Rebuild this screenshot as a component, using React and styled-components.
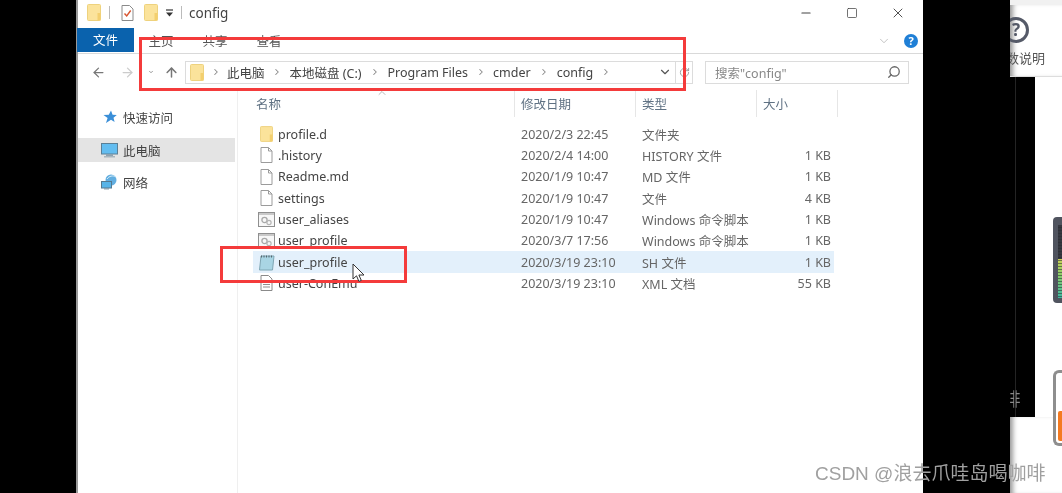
import React from 'react'
import styled, { createGlobalStyle } from 'styled-components'
import {
    ArrowLeft, ArrowRight, ArrowUp, ChevronDown, ChevronRight, ChevronUp,
    Minus, RotateCw, Search, Square, X
} from 'lucide-react'

const FONT = '"Noto Sans", "Noto Sans CJK SC", sans-serif'

const GlobalStyle = createGlobalStyle`
    html, body {
        margin: 0;
        padding: 0;
        background: #000;
        overflow: hidden;
    }
    * {
        box-sizing: border-box;
    }
`

const Page = styled.div`
    position: relative;
    display: grid;
    grid-template-columns: 76px 847px 1fr;
    width: 1062px;
    height: 493px;
    overflow: hidden;
    background: #000;
    font-family: ${FONT};
    font-size: 12.5px;
    color: #555;
    filter: blur(0.45px);
`

const BlackBar = styled.div`
    background: #000;
`

const Explorer = styled.div`
    display: flex;
    flex-direction: column;
    background: #fff;
    border-left: 2px solid #9a9a9a;
`

const TitleBar = styled.div`
    display: flex;
    align-items: center;
    height: 28px;
    padding: 0 2px 3px 9px;
`

const QuickIcon = styled.span`
    display: flex;
    margin-right: ${p => p.$gap || 0}px;
`

const TitleSep = styled.span`
    width: 1px;
    height: 13px;
    background: #bbb;
    margin-right: ${p => p.$gap}px;
`

const TitleText = styled.span`
    font-size: 13.5px;
    color: #444;
    flex: 1;
`

const WindowButton = styled.span`
    display: flex;
    justify-content: center;
    width: 46px;
    color: #444;
`

const Ribbon = styled.div`
    display: flex;
    align-items: center;
    height: 26px;
    border-bottom: 1px solid #d9d9d9;
    padding-right: 5px;
`

const FileTab = styled.div`
    width: 57px;
    height: 24px;
    margin: -2px 0 0 -1px;
    background: #0a62ad;
    color: #fff;
    display: flex;
    align-items: center;
    justify-content: center;
`

const RibbonTab = styled.div`
    width: 54px;
    text-align: center;
    color: #555;
`

const RibbonSpacer = styled.div`
    flex: 1;
`

const HelpDot = styled.div`
    width: 14px;
    height: 14px;
    margin-left: 13px;
    border-radius: 50%;
    background: #1f7fd6;
    color: #fff;
    font-size: 11px;
    font-weight: 700;
    line-height: 14px;
    text-align: center;
`

const AddressRow = styled.div`
    display: flex;
    align-items: center;
    height: 36px;
    padding: 0 0 0 11px;
    color: #888;
`

const NavButton = styled.span`
    display: flex;
    justify-content: center;
    width: ${p => p.$w}px;
    color: ${p => p.$color || '#777'};
`

const AddressBox = styled.div`
    display: flex;
    align-items: center;
    width: 508px;
    height: 23px;
    margin-left: -3px;
    padding-left: 4px;
    border: 1px solid #dcdcdc;
    color: #444;
`

const Crumb = styled.span`
    white-space: nowrap;
`

const CrumbArrow = styled.span`
    display: flex;
    justify-content: center;
    width: ${p => p.$w}px;
    color: #888;
`

const AddressEnd = styled.div`
    display: flex;
    align-items: center;
    margin-left: auto;
    height: 100%;
`

const RefreshCell = styled.span`
    display: flex;
    align-items: center;
    justify-content: center;
    width: 17px;
    height: 100%;
    margin-left: 3px;
    border-left: 1px solid #dcdcdc;
    color: #999;
`

const SearchBox = styled.div`
    display: flex;
    align-items: center;
    justify-content: space-between;
    width: 204px;
    height: 23px;
    margin-left: 12px;
    padding: 0 7px 0 9px;
    border: 1px solid #dcdcdc;
    color: #888;
`

const SearchGlass = styled(Search)`
    transform: scaleX(-1);
    color: #666;
`

const Body = styled.div`
    display: flex;
    flex: 1;
    min-height: 0;
`

const Sidebar = styled.div`
    width: 160px;
    padding-top: 15px;
    border-right: 1px solid #efefef;
`

const NavItem = styled.div`
    display: flex;
    align-items: center;
    height: 24px;
    width: 157px;
    margin-bottom: ${p => p.$gap}px;
    padding-left: ${p => p.$indent}px;
    background: ${p => p.$active ? '#e4e4e4' : 'transparent'};
    color: #444;
`

const NavLabel = styled.span`
    margin-left: ${p => p.$gap}px;
`

const Files = styled.div`
    flex: 1;
    padding-left: 2px;
`

const HeaderRow = styled.div`
    position: relative;
    display: grid;
    grid-template-columns: 275px 121px 121px 81px;
    height: 27px;
`

const HeaderCell = styled.div`
    display: flex;
    align-items: center;
    padding-left: ${p => p.$pad}px;
    border-right: 1px solid #e6e6e6;
    color: #5f7183;
`

const SortCaret = styled(ChevronUp)`
    position: absolute;
    left: 136px;
    top: -3px;
    color: #888;
`

const FileList = styled.div`
    margin: 6.5px 0 0 13px;
    width: 581px;
`

const FileRow = styled.div`
    display: grid;
    grid-template-columns: 25px 243px 121px 1fr 60px;
    align-items: center;
    height: 21.33px;
    padding-right: 3px;
    background: ${p => p.$hover ? '#e3f0fb' : 'transparent'};
    white-space: nowrap;
`

const FileIconCell = styled.span`
    display: flex;
    justify-content: center;
    padding-left: 1px;
`

const FileName = styled.span`
    color: #444;
`

const FileMeta = styled.span`
    color: #666;
`

const FileSize = styled.span`
    color: #666;
    text-align: right;
`

const RightPane = styled.div`
    position: relative;
    display: flex;
    flex-direction: column;
    align-items: flex-end;
    background: #000;
`

const HelpPanel = styled.div`
    width: 52px;
    height: 77px;
    overflow: hidden;
    background: #fff;
    border-top: 5px solid #f1f1f1;
    border-bottom: 1px solid #ddd;
    box-shadow: inset 6px 0 5px -3px #999;
`

const HelpCircle = styled.div`
    width: 26px;
    height: 26px;
    margin: 12px 0 0 -7px;
    border: 3px solid #555a68;
    border-radius: 50%;
    color: #555a68;
    font-size: 17px;
    font-weight: 700;
    line-height: 20px;
    text-align: center;
`

const HelpLabel = styled.div`
    display: flex;
    justify-content: flex-end;
    margin-top: 5px;
    padding-right: 17px;
    font-size: 13px;
    color: #555;
    white-space: nowrap;
`

const MiddlePanel = styled.div`
    flex: 1;
    width: 27px;
    padding: 140px 0 0 18px;
    background: #fff;
`

const Meter = styled.div`
    width: 9px;
    height: 86px;
    padding: 8px 0 5px 5px;
    border-radius: 4px 0 0 4px;
    background: #50545f;
`

const MeterBars = styled.div`
    height: 100%;
    background:
        repeating-linear-gradient(to bottom, transparent 0, transparent 2px, rgba(40, 42, 50, 0.55) 2px, rgba(40, 42, 50, 0.55) 3px),
        linear-gradient(to bottom, #35383f 0, #35383f 46%, #c9d056 47%, #86cc6c 70%, #3fb8a2 100%);
`

const BottomPanel = styled.div`
    width: 52px;
    height: 76px;
    background: #fff;
    box-shadow: inset 6px 0 5px -3px #999;
`

const Gauge = styled.div`
    position: absolute;
    left: 130px;
    top: 370px;
    width: 20px;
    height: 76px;
    padding: 38px 0 2px 2px;
    border: 3px solid #8e8e8e;
    border-right: none;
    border-radius: 6px 0 0 6px;
    background: #fff;
`

const GaugeFill = styled.div`
    height: 100%;
    border-radius: 2px 0 0 2px;
    background: #f47a20;
`

const SeamLine = styled.div`
    position: absolute;
    left: 92px;
    top: 77px;
    width: 1px;
    height: 340px;
    background: #242424;
`

const SeamGlyph = styled.div`
    position: absolute;
    left: 83px;
    top: 390px;
    font-size: 18px;
    line-height: 18px;
    color: #8a8a8a;
    transform: scaleX(0.6);
`

const Annotation = styled.div`
    position: absolute;
    left: ${p => p.$x}px;
    top: ${p => p.$y}px;
    width: ${p => p.$w}px;
    height: ${p => p.$h}px;
    border: 3px solid #f43b3b;
    pointer-events: none;
`

const Pointer = styled.svg`
    position: absolute;
    left: 352px;
    top: 263px;
`

const Watermark = styled.div`
    position: absolute;
    left: 815px;
    top: 461px;
    font-family: "Liberation Sans", "Noto Sans CJK SC", sans-serif;
    font-size: 19px;
    line-height: 26px;
    color: #a0a0a0;
    white-space: nowrap;
`

const FolderIcon = ({ w = 14, h = 17 }) => (
    <svg width={w} height={h} viewBox="0 0 14 17">
        <rect x="0.5" y="0.5" width="13" height="16" rx="1" fill="#fbe39b" stroke="#eed27e" />
        <rect x="10.5" y="9" width="3" height="7.5" fill="#f3cf6e" />
    </svg>
)

const DocIcon = () => (
    <svg width="13" height="16" viewBox="0 0 13 16">
        <path d="M1 .5h7.5l3.5 3.5v11.5H1z" fill="#fff" stroke="#9b9b9b" />
        <path d="M8.5.5V4H12" fill="none" stroke="#9b9b9b" />
    </svg>
)

const CheckDocIcon = () => (
    <svg width="13" height="16" viewBox="0 0 13 16">
        <path d="M1 .5h7.5l3.5 3.5v11.5H1z" fill="#fff" stroke="#8a8a8a" />
        <path d="M3.5 8.5l2.2 2.5 4-5.5" fill="none" stroke="#d8542f" strokeWidth="1.4" />
    </svg>
)

const ScriptIcon = () => (
    <svg width="17" height="15" viewBox="0 0 17 15">
        <rect x="0.5" y="0.5" width="16" height="14" fill="#f7f7f7" stroke="#8f8f8f" />
        <rect x="1" y="1" width="15" height="2" fill="#c9c9c9" />
        <circle cx="6.5" cy="8" r="2.6" fill="none" stroke="#a8a8a8" strokeWidth="1.3" />
        <circle cx="11" cy="10.5" r="2.1" fill="none" stroke="#b5b5b5" strokeWidth="1.2" />
    </svg>
)

const NotepadIcon = () => (
    <svg width="17" height="17" viewBox="0 0 17 17">
        <path d="M3 2h13l-1.5 14H1.5z" fill="#a9d5e4" stroke="#7fa6b4" />
        <path d="M3.5 1.5v2M6 1.5v2M8.5 1.5v2M11 1.5v2M13.5 1.5v2" stroke="#55656c" />
    </svg>
)

const XmlIcon = () => (
    <svg width="13" height="16" viewBox="0 0 13 16">
        <path d="M1 .5h7.5l3.5 3.5v11.5H1z" fill="#fff" stroke="#8a8a8a" />
        <path d="M3 7h7M3 9.5h7M3 12h7" stroke="#8f8f8f" />
    </svg>
)

const StarIcon = () => (
    <svg width="14" height="14" viewBox="0 0 14 14">
        <path d="M8 .5l1.6 4.2 4.2.2-3.3 2.8 1.1 4.3L8 9.7l-5 3.3 1.6-5L.5 5l5.3-.2z" fill="#3b8fd8" />
    </svg>
)

const PcIcon = () => (
    <svg width="17" height="15" viewBox="0 0 17 15">
        <rect x="0.5" y="0.5" width="16" height="10.5" fill="#63bdf0" stroke="#5b7f96" />
        <rect x="5" y="11" width="7" height="2" fill="#8fa3b0" />
        <rect x="3" y="13" width="11" height="1.5" fill="#a7b5be" />
    </svg>
)

const NetworkIcon = () => (
    <svg width="17" height="16" viewBox="0 0 17 16">
        <circle cx="10" cy="6" r="5.5" fill="#62aee0" />
        <path d="M6 5c2-3 6-4 9-2" stroke="#d8eefa" fill="none" />
        <rect x="0.5" y="7.5" width="10" height="6.5" fill="#58b4e8" stroke="#56798f" />
        <rect x="3" y="14" width="5" height="1.5" fill="#8fa3b0" />
    </svg>
)

const QuickDropdown = () => (
    <svg width="9" height="8" viewBox="0 0 9 8">
        <path d="M1 1h7" stroke="#333" strokeWidth="1.2" />
        <path d="M1 3.5h7L4.5 7.5z" fill="#333" />
    </svg>
)

const crumbs = [
    ['此电脑', 25],
    ['本地磁盘 (C:)', 26],
    ['Program Files', 25],
    ['cmder', 26],
    ['config', 26]
]

const files = [
    { icon: <FolderIcon w={13} h={16} />, name: 'profile.d', date: '2020/2/3 22:45', type: '文件夹', size: '' },
    { icon: <DocIcon />, name: '.history', date: '2020/2/4 14:00', type: 'HISTORY 文件', size: '1 KB' },
    { icon: <DocIcon />, name: 'Readme.md', date: '2020/1/9 10:47', type: 'MD 文件', size: '1 KB' },
    { icon: <DocIcon />, name: 'settings', date: '2020/1/9 10:47', type: '文件', size: '4 KB' },
    { icon: <ScriptIcon />, name: 'user_aliases', date: '2020/1/9 10:47', type: 'Windows 命令脚本', size: '1 KB' },
    { icon: <ScriptIcon />, name: 'user_profile', date: '2020/3/7 17:56', type: 'Windows 命令脚本', size: '1 KB' },
    { icon: <NotepadIcon />, name: 'user_profile', date: '2020/3/19 23:10', type: 'SH 文件', size: '1 KB', hover: true },
    { icon: <XmlIcon />, name: 'user-ConEmu', date: '2020/3/19 23:10', type: 'XML 文档', size: '55 KB' }
]

const App = () => (
    <Page>
        <GlobalStyle />
        <BlackBar />
        <Explorer>
            <TitleBar>
                <QuickIcon $gap={8}><FolderIcon /></QuickIcon>
                <TitleSep $gap={11} />
                <QuickIcon $gap={10}><CheckDocIcon /></QuickIcon>
                <QuickIcon $gap={7}><FolderIcon /></QuickIcon>
                <QuickIcon $gap={7}><QuickDropdown /></QuickIcon>
                <TitleSep $gap={7} />
                <TitleText>config</TitleText>
                <WindowButton><Minus size={14} /></WindowButton>
                <WindowButton><Square size={12} strokeWidth={1.5} /></WindowButton>
                <WindowButton><X size={16} strokeWidth={1.4} /></WindowButton>
            </TitleBar>
            <Ribbon>
                <FileTab>文件</FileTab>
                <RibbonTab>主页</RibbonTab>
                <RibbonTab>共享</RibbonTab>
                <RibbonTab>查看</RibbonTab>
                <RibbonSpacer />
                <ChevronDown size={14} strokeWidth={1.2} color="#aaa" />
                <HelpDot>?</HelpDot>
            </Ribbon>
            <AddressRow>
                <NavButton $w={18}><ArrowLeft size={15} /></NavButton>
                <NavButton $w={41} $color="#ccc"><ArrowRight size={15} /></NavButton>
                <NavButton $w={6}><ChevronDown size={10} strokeWidth={3} /></NavButton>
                <NavButton $w={34}><ArrowUp size={15} strokeWidth={2.4} /></NavButton>
                <AddressBox>
                    <FolderIcon />
                    <CrumbArrow $w={23}><ChevronRight size={10} strokeWidth={2.5} /></CrumbArrow>
                    {crumbs.map(([label, arrow]) => (
                        <React.Fragment key={label}>
                            <Crumb>{label}</Crumb>
                            <CrumbArrow $w={arrow}><ChevronRight size={10} strokeWidth={2.5} /></CrumbArrow>
                        </React.Fragment>
                    ))}
                    <AddressEnd>
                        <ChevronDown size={14} strokeWidth={2} color="#555" />
                        <RefreshCell><RotateCw size={11} /></RefreshCell>
                    </AddressEnd>
                </AddressBox>
                <SearchBox>
                    <span>搜索"config"</span>
                    <SearchGlass size={14} strokeWidth={2.2} />
                </SearchBox>
            </AddressRow>
            <Body>
                <Sidebar>
                    <NavItem $gap={9} $indent={25}><StarIcon /><NavLabel $gap={6}>快速访问</NavLabel></NavItem>
                    <NavItem $gap={8} $indent={23} $active><PcIcon /><NavLabel $gap={5}>此电脑</NavLabel></NavItem>
                    <NavItem $gap={0} $indent={23}><NetworkIcon /><NavLabel $gap={5}>网络</NavLabel></NavItem>
                </Sidebar>
                <Files>
                    <HeaderRow>
                        <HeaderCell $pad={16}>名称</HeaderCell>
                        <HeaderCell $pad={6}>修改日期</HeaderCell>
                        <HeaderCell $pad={6}>类型</HeaderCell>
                        <HeaderCell $pad={6}>大小</HeaderCell>
                        <SortCaret size={12} strokeWidth={1.2} />
                    </HeaderRow>
                    <FileList>
                        {files.map(f => (
                            <FileRow key={f.name + f.date} $hover={f.hover}>
                                <FileIconCell>{f.icon}</FileIconCell>
                                <FileName>{f.name}</FileName>
                                <FileMeta>{f.date}</FileMeta>
                                <FileMeta>{f.type}</FileMeta>
                                <FileSize>{f.size}</FileSize>
                            </FileRow>
                        ))}
                    </FileList>
                </Files>
            </Body>
        </Explorer>
        <RightPane>
            <HelpPanel>
                <HelpCircle>?</HelpCircle>
                <HelpLabel>参数说明</HelpLabel>
            </HelpPanel>
            <MiddlePanel>
                <Meter><MeterBars /></Meter>
            </MiddlePanel>
            <BottomPanel />
            <SeamLine />
            <SeamGlyph>非</SeamGlyph>
            <Gauge><GaugeFill /></Gauge>
        </RightPane>
        <Annotation $x={139} $y={37} $w={547} $h={54} />
        <Annotation $x={220} $y={246} $w={187} $h={37} />
        <Pointer width="14" height="20" viewBox="0 0 14 20">
            <path d="M1 1v15l3.5-3.2 2.4 5.6 2.4-1-2.4-5.4H12z" fill="#fff" stroke="#333" strokeWidth="1" />
        </Pointer>
        <Watermark>CSDN @浪去爪哇岛喝咖啡</Watermark>
    </Page>
)

export default App
